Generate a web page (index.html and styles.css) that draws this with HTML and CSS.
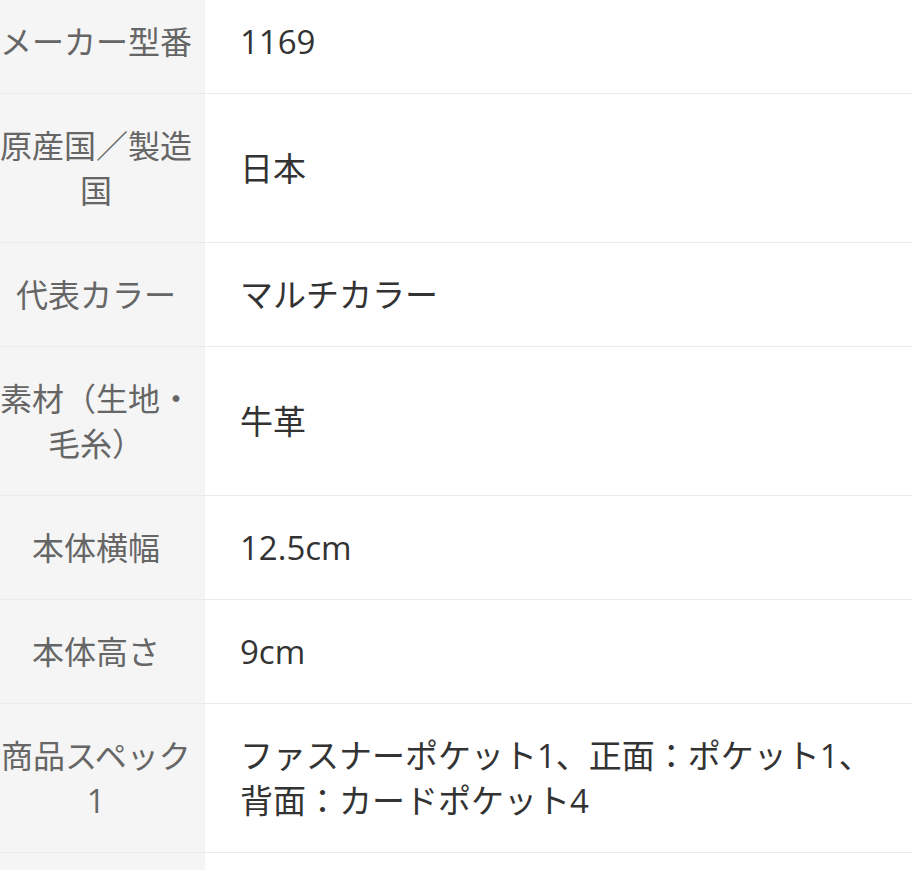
FILE: index.html
```html
<!DOCTYPE html>
<html lang="ja">
<head>
<meta charset="utf-8">
<link rel="stylesheet" href="styles.css">
</head>
<body>
<table class="spec">
<tbody>
<tr><th>メーカー型番</th><td>1169</td></tr>
<tr><th>原産国／製造国</th><td>日本</td></tr>
<tr><th>代表カラー</th><td>マルチカラー</td></tr>
<tr><th>素材（生地・毛糸）</th><td>牛革</td></tr>
<tr><th>本体横幅</th><td>12.5cm</td></tr>
<tr><th>本体高さ</th><td>9cm</td></tr>
<tr><th>商品スペック1</th><td>ファスナーポケット1、正面：ポケット1、背面：カードポケット4</td></tr>
<tr><th>&nbsp;</th><td>&nbsp;</td></tr>
</tbody>
</table>
</body>
</html>
```
FILE: styles.css
```css
html, body {
  margin: 0;
  padding: 0;
  background: #ffffff;
  overflow: hidden;
}
body {
  font-family: "Open Sans", "Noto Sans CJK JP", sans-serif;
  font-size: 32px;
  line-height: 45px;
}
.spec {
  border-collapse: collapse;
  margin: -10px 0 0 -2px;
  width: 914px;
  table-layout: fixed;
}
.spec th {
  width: 196px;
  padding: 29px 11px 29px 0;
  background: #f5f5f5;
  color: #666666;
  font-weight: normal;
  text-align: center;
  vertical-align: middle;
  border-bottom: 1px solid #ebebeb;
}
.spec td {
  padding: 29px 40px 29px 35px;
  font-size: 33px;
  color: #333333;
  vertical-align: middle;
  border-bottom: 1px solid #ebebeb;
}
```
